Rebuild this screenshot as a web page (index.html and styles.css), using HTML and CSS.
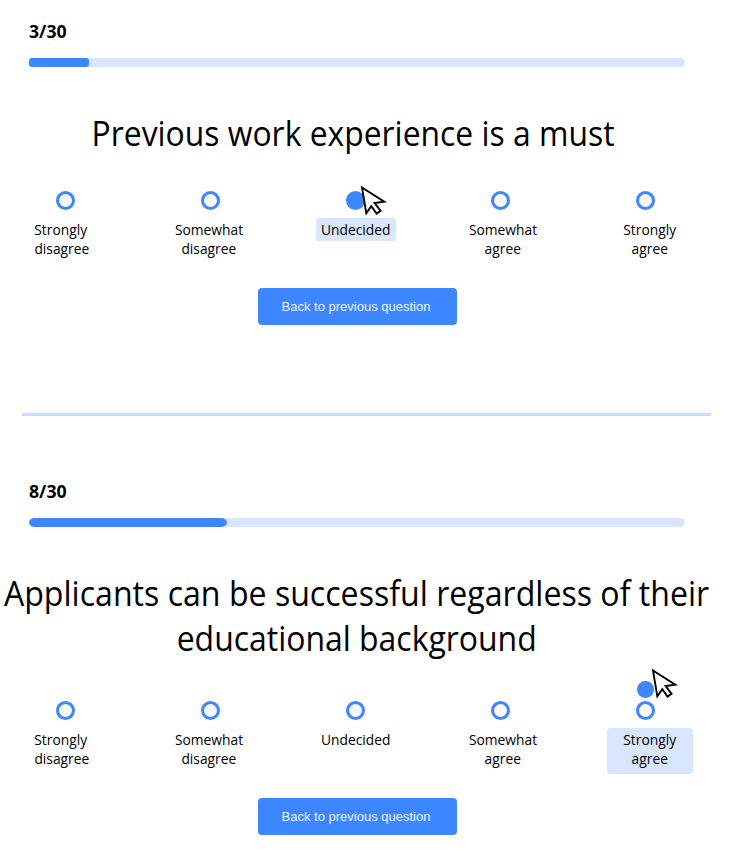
FILE: index.html
```html
<!DOCTYPE html>
<html lang="en">
<head>
<meta charset="utf-8">
<title>Questionnaire</title>
<link rel="stylesheet" href="styles.css">
</head>
<body>
<svg class="defs" width="0" height="0" aria-hidden="true">
  <symbol id="pointer" viewBox="0 0 28 32">
    <path d="M2 2.5 L24.3 16.7 L14.6 18 L20.6 25.8 L16.6 28.6 L11.3 21.2 L6.3 28.4 Z" fill="#fff" stroke="#000" stroke-width="1.9"/>
  </symbol>
</svg>
<section class="question">
  <p class="count">3/30</p>
  <div class="track"><div class="fill short"></div></div>
  <h1 class="title first"><span>Previous work experience is a must</span></h1>
  <div class="dots">
    <i class="dot"></i><i class="dot"></i>
    <i class="dot on"><svg class="cursor"><use href="#pointer"/></svg></i>
    <i class="dot"></i><i class="dot"></i>
  </div>
  <div class="labels">
    <div class="label"><span class="lead">Strongly</span><span>disagree</span></div>
    <div class="label"><span>Somewhat</span><span>disagree</span></div>
    <div class="label picked"><span>Undecided</span></div>
    <div class="label"><span>Somewhat</span><span>agree</span></div>
    <div class="label"><span>Strongly</span><span>agree</span></div>
  </div>
  <button class="back">Back to previous question</button>
</section>
<hr class="divider">
<section class="question">
  <p class="count">8/30</p>
  <div class="track"><div class="fill long"></div></div>
  <h1 class="title"><span>Applicants can be successful regardless of their</span><span>educational background</span></h1>
  <div class="dots">
    <i class="dot"></i><i class="dot"></i><i class="dot"></i><i class="dot"></i>
    <i class="dot"><b class="marker"></b><svg class="cursor raised"><use href="#pointer"/></svg></i>
  </div>
  <div class="labels">
    <div class="label"><span class="lead">Strongly</span><span>disagree</span></div>
    <div class="label"><span>Somewhat</span><span>disagree</span></div>
    <div class="label"><span>Undecided</span></div>
    <div class="label"><span>Somewhat</span><span>agree</span></div>
    <div class="label picked wide"><span>Strongly</span><span>agree</span></div>
  </div>
  <button class="back">Back to previous question</button>
</section>
</body>
</html>
```
FILE: styles.css
```css
* { box-sizing: border-box; }
html, body { height: 865px; overflow: hidden; }
body {
  margin: 0;
  padding-top: 21px;
  background: #fff;
  color: #000;
  font-family: "Open Sans", "Noto Sans", sans-serif;
}
.defs { display: block; }
.question { display: flex; flex-direction: column; width: 733px; }
.count {
  margin: 0 0 0 29px;
  font-size: 17.7px;
  line-height: 20px;
  font-weight: 700;
}
.track {
  width: 656px;
  height: 9.5px;
  margin: 16.5px 0 44px 29px;
  border-radius: 5px;
  background: #d9e4ff;
}
.fill { height: 100%; background: #3c86ff; }
.short { width: 60px; border-radius: 3px; }
.long { width: 198px; border-radius: 7px / 5px; }
.title {
  display: flex;
  flex-direction: column;
  align-items: center;
  width: 820px;
  margin: 0 0 40px -53px;
  font-size: 34px;
  line-height: 45px;
  font-weight: 400;
  white-space: nowrap;
}
.title span { transform: scaleX(.944); }
.title span + span { transform: scaleX(.939); }
.first { margin: 0 0 35px -57px; }
.first span { transform: scaleX(.937); }
.dots {
  display: grid;
  grid-template-columns: repeat(5, 19px);
  column-gap: 126px;
  margin-left: 55.8px;
}
.dot {
  position: relative;
  height: 19px;
  border: 3px solid #3c86ff;
  border-radius: 50%;
  background: #f8f8f8;
}
.on { background: #3c86ff; }
.marker {
  position: absolute;
  left: -1.5px;
  top: -23px;
  width: 16.5px;
  height: 16.5px;
  border-radius: 50%;
  background: #3c86ff;
}
.cursor { position: absolute; left: 11.2px; top: -9.5px; width: 28px; height: 32px; z-index: 1; }
.raised { left: 12.2px; top: -36.5px; }
.labels {
  display: grid;
  grid-template-columns: repeat(5, 147px);
  justify-items: center;
  align-items: start;
  height: 60px;
  margin: 8px 0 10px -11.7px;
}
.label {
  display: flex;
  flex-direction: column;
  align-items: center;
  padding-top: 2px;
  font-size: 15px;
  line-height: 19px;
}
.label span { transform: scaleX(.92); }
.label .lead { margin-right: 3px; }
.picked {
  width: 80px;
  height: 23px;
  border-radius: 3px;
  background: #d9e6ff;
}
.wide { width: 86px; height: 46px; margin-top: -.5px; padding-top: 2.5px; }
.back {
  width: 199px;
  height: 37px;
  margin: 0 0 0 258px;
  padding: 0 3px 0 0;
  border: 0;
  border-radius: 4px;
  background: #3c86ff;
  color: #edf4ff;
  font: 13px "Liberation Sans", sans-serif;
}
.divider {
  width: 689px;
  height: 3px;
  margin: 88px 0 65px 21.5px;
  border: 0;
  background: #c4dcff;
}
```
